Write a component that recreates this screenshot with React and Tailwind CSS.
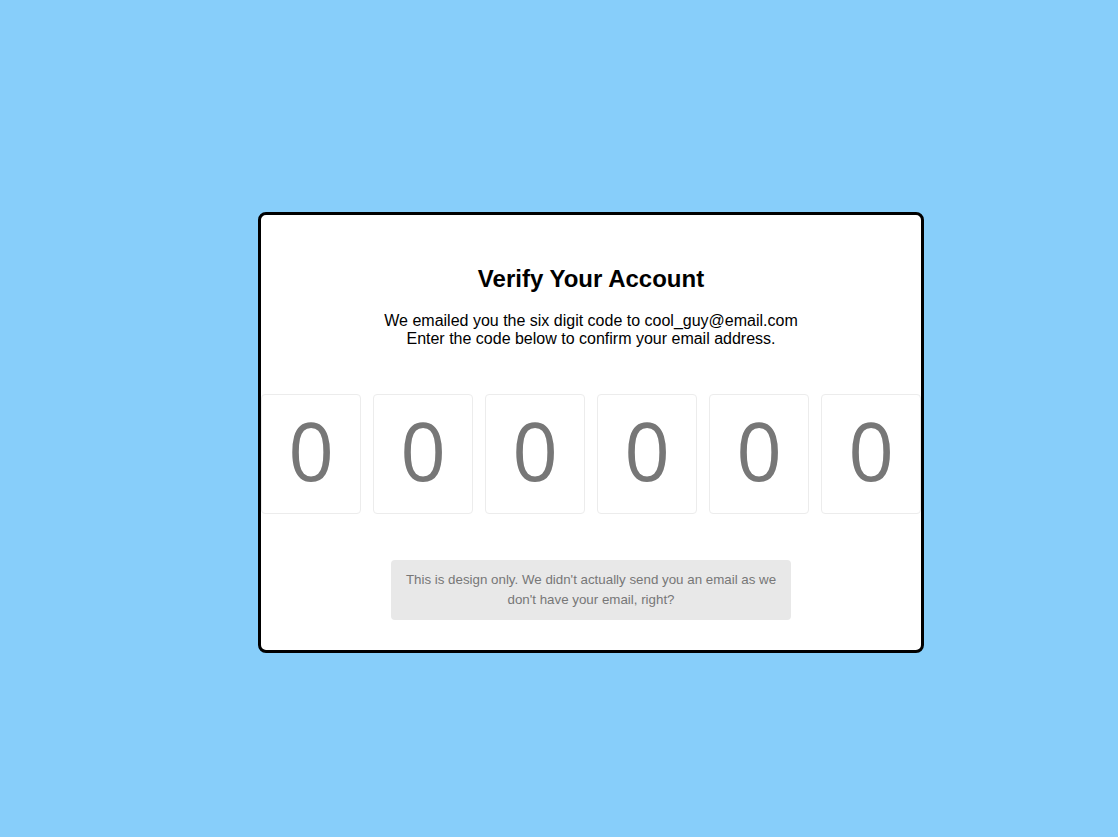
const digits = [ '0', '0', '0', '0', '0', '0' ];

const CodeBox = ( { value } ) => (
	<div className="w-[100px] h-[120px] shrink-0 flex items-center justify-center pb-[8px] border border-[#ececec] rounded-[4px] bg-white">
		<span className="font-['Open_Sans',sans-serif] text-[80px] leading-none text-[#777777]">
			{ value }
		</span>
	</div>
);

export default function App() {
	return (
		<div
			className="min-h-[837px] w-full bg-[#87cefa] pl-[258px] pt-[212px]"
			style={ { fontFamily: '"Liberation Sans", Arial, sans-serif' } }
		>
			<div className="w-[666px] border-[3px] border-black rounded-[8px] bg-white flex flex-col items-center pt-[50px] pb-[30px]">
				<h1 className="text-[24px] leading-[28px] font-bold text-black">
					Verify Your Account
				</h1>
				<p className="mt-[19px] text-[16px] leading-[18px] text-black text-center">
					We emailed you the six digit code to cool_guy@email.com
					<br />
					Enter the code below to confirm your email address.
				</p>
				<div className="mt-[46px] w-full flex gap-[12px]">
					{ digits.map( ( d, i ) => (
						<CodeBox key={ i } value={ d } />
					) ) }
				</div>
				<div className="mt-[46px] w-[400px] rounded-[4px] bg-[#e8e8e8] px-[10px] py-[10px] text-center text-[13.33px] leading-[20px] text-[#777777]">
					This is design only. We didn't actually send you an email as we
					don't have your email, right?
				</div>
			</div>
		</div>
	);
}
